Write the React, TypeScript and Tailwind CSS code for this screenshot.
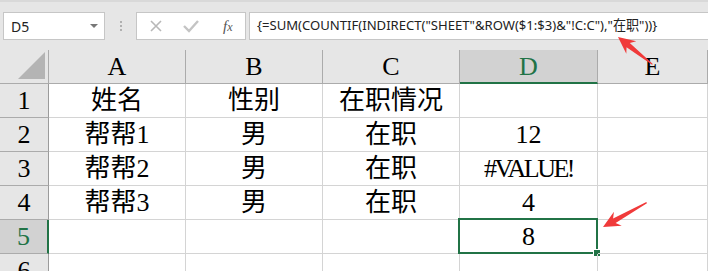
import React from "react";

const cols = ["A", "B", "C", "D", "E"];

const rows: string[][] = [
  ["姓名", "性别", "在职情况", "", ""],
  ["帮帮1", "男", "在职", "12", ""],
  ["帮帮2", "男", "在职", "#VALUE!", ""],
  ["帮帮3", "男", "在职", "4", ""],
  ["", "", "", "8", ""],
  ["", "", "", "", ""],
];

const cellFont = {
  fontFamily: '"Liberation Serif", "Noto Sans CJK SC", serif',
};

function Arrow({ x, y, angle, len }: { x: number; y: number; angle: number; len: number }) {
  return (
    <polygon
      transform={`translate(${x} ${y}) rotate(${angle})`}
      points={`0,0 17,-8 13,-2.6 ${len},-0.6 ${len},0.6 13,2.6 17,8`}
      fill="#f03a3a"
    />
  );
}

export default function App() {
  return (
    <div className="relative h-[271px] w-[708px] overflow-hidden bg-white" style={cellFont}>
      {/* formula bar */}
      <div
        className="flex h-[50px] items-start border-t-2 border-[#d9d9d9] bg-[#e6e6e6] pt-[10px]"
        style={{ fontFamily: '"Noto Sans", "Noto Sans CJK SC", sans-serif' }}
      >
        <div className="ml-[3px] flex h-[28px] w-[102px] items-center justify-between border border-[#c6c6c6] bg-white pl-[7px] pr-[6px] text-[14px] text-[#222]">
          <span>D5</span>
          <span className="h-0 w-0 border-x-[4px] border-t-[4px] border-x-transparent border-t-[#777]" />
        </div>
        <div className="flex w-[31px] flex-col items-center gap-[2px] pt-[9px]">
          <span className="h-[2px] w-[2px] bg-[#b0b0b0]" />
          <span className="h-[2px] w-[2px] bg-[#b0b0b0]" />
          <span className="h-[2px] w-[2px] bg-[#b0b0b0]" />
        </div>
        <div className="flex h-[28px] w-[110px] items-center border border-[#c6c6c6] bg-white">
          <svg width="108" height="26" viewBox="0 0 108 26">
            <path d="M14 8 L24 18 M24 8 L14 18" stroke="#b8b8b8" strokeWidth="1.6" fill="none" />
            <path d="M47 13 L52 18 L61 8" stroke="#c4c4c4" strokeWidth="2.4" fill="none" />
          </svg>
          <span
            className="-ml-[22px] text-[15px] italic text-[#555]"
            style={{ fontFamily: '"Liberation Serif", serif' }}
          >
            f<span className="text-[12px]">x</span>
          </span>
        </div>
        <div className="ml-[3px] flex h-[28px] flex-1 items-center border border-r-0 border-[#c6c6c6] bg-white pl-[7px] text-[13.1px] text-[#222]">
          {'{=SUM(COUNTIF(INDIRECT("SHEET"&ROW($1:$3)&"!C:C"),"在职"))}'}
        </div>
      </div>

      {/* sheet */}
      <div className="grid grid-cols-[49px_137px_137px_137px_138px_1fr]">
        <div className="relative h-[34px] border-r border-b border-[#ababab] bg-[#e6e6e6]">
          <svg className="absolute left-[18px] top-[2px]" width="28" height="28" viewBox="0 0 28 28">
            <polygon points="27,0 27,27 0,27" fill="#b4b4b4" />
          </svg>
        </div>
        {cols.map((c) => (
          <div
            key={c}
            className={`flex h-[34px] items-center justify-center border-r text-[26px] leading-none ${
              c === "D"
                ? "border-b-2 border-r-[#ababab] border-b-[#217346] bg-[#d2d2d2] text-[#217346]"
                : "border-b border-r-[#ababab] border-b-[#ababab] bg-[#e6e6e6] text-black"
            }`}
          >
            <span className="pt-[1px]">{c}</span>
          </div>
        ))}

        {rows.map((r, i) => (
          <React.Fragment key={i}>
            <div
              className={`flex h-[34px] items-center justify-center border-b border-b-[#ababab] text-[26px] leading-none ${
                i === 4
                  ? "border-r-2 border-r-[#217346] bg-[#d2d2d2] text-[#217346]"
                  : "border-r border-r-[#9b9b9b] bg-[#e6e6e6] text-black"
              }`}
            >
              {i + 1}
            </div>
            {r.map((v, j) => (
              <div
                key={j}
                className="relative flex h-[34px] items-center justify-center border-r border-b border-[#d4d4d4] text-[26px] leading-none text-black"
              >
                <span className={v === "#VALUE!" ? "tracking-[-2.5px]" : ""}>{v}</span>
                {i === 4 && j === 3 && (
                  <div className="absolute left-[-2px] top-[-2px] h-[36px] w-[140px] border-2 border-[#217346]">
                    <div className="absolute bottom-[-4px] right-[-4px] h-[6px] w-[6px] bg-[#217346] outline outline-1 outline-white" />
                  </div>
                )}
              </div>
            ))}
          </React.Fragment>
        ))}
      </div>

      {/* annotations */}
      <svg className="pointer-events-none absolute left-0 top-0" width="708" height="271">
        <Arrow x={618} y={37} angle={38.5} len={44} />
        <Arrow x={603} y={227} angle={-29.2} len={50} />
      </svg>
    </div>
  );
}
